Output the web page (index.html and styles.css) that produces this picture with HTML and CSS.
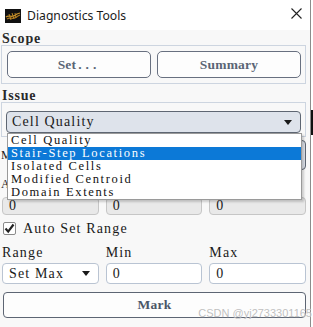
FILE: index.html
```html
<!DOCTYPE html>
<html>
<head>
<meta charset="utf-8">
<link rel="stylesheet" href="styles.css">
</head>
<body>
<div class="app">
  <div class="window">
    <div class="titlebar">
      <svg class="appicon" width="16" height="14" viewBox="0 0 16 14">
        <rect width="16" height="14" fill="#111"/>
        <path d="M1 8 C4 5 7 10 12 5 L15 4" stroke="#c8922a" stroke-width="1.2" fill="none"/>
        <path d="M2 10 C5 7 8 12 13 7 L15 6" stroke="#a8761e" stroke-width="1.2" fill="none"/>
        <path d="M4 5 L6 11 M7 4 L9 10 M10 4 L11 9" stroke="#b88424" stroke-width="1" fill="none"/>
      </svg>
      <span class="title">Diagnostics Tools</span>
      <svg class="close" width="11" height="11" viewBox="0 0 11 11">
        <path d="M0.5 0.5 L10.5 10.5 M10.5 0.5 L0.5 10.5" stroke="#222" stroke-width="1.1"/>
      </svg>
    </div>
    <div class="content">
      <div class="section-label">Scope</div>
      <div class="group scope">
        <button class="btn">Set<span class="dots">...</span></button>
        <button class="btn">Summary</button>
      </div>
      <div class="section-label issue-label">Issue</div>
      <div class="group issue">
        <div class="select dark">
          <span>Cell Quality</span><span class="arrow"></span>
          <ul class="dropdown">
            <li>Cell Quality</li>
            <li class="sel">Stair-Step Locations</li>
            <li>Isolated Cells</li>
            <li>Modified Centroid</li>
            <li>Domain Extents</li>
          </ul>
        </div>
      </div>
      <div class="measure-row">
        <span class="lbl">M</span>
        <div class="select dark measure"><span class="arrow"></span></div>
      </div>
      <div class="grid3 labels top-labels"><span>A</span><span></span><span></span></div>
      <div class="grid3 inputs-a">
        <div class="input disabled">0</div>
        <div class="input disabled">0</div>
        <div class="input disabled">0</div>
      </div>
      <div class="check">
        <span class="box"><svg width="11" height="11" viewBox="0 0 11 11"><path d="M1.5 5.5 L4.2 8.6 L9.5 1.5" stroke="#222" stroke-width="2.2" fill="none"/></svg></span>
        <span>Auto Set Range</span>
      </div>
      <div class="grid3 labels range-labels"><span>Range</span><span>Min</span><span>Max</span></div>
      <div class="grid3 inputs-b">
        <div class="select light"><span>Set Max</span><span class="arrow"></span></div>
        <div class="input">0</div>
        <div class="input">0</div>
      </div>
      <button class="btn mark">Mark</button>
    </div>
  </div>
  <div class="edge"></div>
  <div class="outside"><div class="blk"></div></div>
  <div class="watermark">CSDN @yj2733301165</div>
</div>
</body>
</html>
```
FILE: styles.css
```css
* { box-sizing: border-box; }
html, body { margin: 0; padding: 0; background: #fff; }
body { width: 313px; height: 327px; overflow: hidden; }
.app {
  position: relative;
  display: flex;
  width: 313px;
  height: 327px;
  font-family: "Liberation Serif", serif;
  font-size: 14px;
  letter-spacing: 1.15px;
  color: #1a1a1a;
}
.window {
  width: 310px;
  height: 327px;
  background: #f8f8f8;
  display: flex;
  flex-direction: column;
}
.edge { width: 1px; background: #8c8c8c; }
.outside { flex: 1; background: #fff; padding-top: 110px; }
.blk { width: 2px; height: 25px; background: #111; }

.titlebar {
  height: 30px;
  background: #fff;
  display: flex;
  align-items: center;
  padding: 0 0 0 5px;
}
.appicon { display: block; margin-top: 1px; }
.title {
  font-family: "Noto Sans", "Open Sans", sans-serif;
  font-size: 12.2px;
  letter-spacing: 0;
  color: #1b1b1b;
  margin-left: 6px;
  flex: 1;
}
.close { margin-right: 8px; margin-top: -3px; }

.content {
  padding: 0 4px 0 1px;
  display: flex;
  flex-direction: column;
}
.section-label {
  height: 15px;
  line-height: 13px;
  padding-left: 1px;
  font-weight: bold;
  font-size: 14px;
  letter-spacing: 0.8px;
  color: #2a2a2a;
  padding-top: 2px;
}
.issue-label { margin-top: 3px; height: 15px; }

.group {
  border: 1px solid #cdd5e0;
}
.scope {
  display: flex;
  gap: 6px;
  padding: 5px 4px 5px 5px;
  height: 39px;
}
.btn {
  font-family: "Liberation Serif", serif;
  font-size: 13.5px;
  font-weight: bold;
  letter-spacing: 0.2px;
  color: #5a6575;
  background: #fdfdfd;
  border: 1px solid #687080;
  border-radius: 5px;
  padding: 0;
  margin: 0;
}
.dots { letter-spacing: 4px; margin-left: 2px; }
.scope .btn { flex: 1; height: 27px; }

.issue {
  padding: 8px 4px 3px 4px;
  height: 35px;
}
.select {
  position: relative;
  display: flex;
  align-items: center;
  justify-content: space-between;
  border-radius: 4px;
}
.select.dark {
  height: 22px;
  background: #dee3eb;
  border: 1px solid #5e6672;
  padding: 0 8px 0 5px;
}
.arrow {
  width: 0; height: 0;
  border-left: 4px solid transparent;
  border-right: 4px solid transparent;
  border-top: 5px solid #1a1a1a;
}
.measure .arrow { margin-left: auto; }
.dropdown {
  position: absolute;
  left: 0;
  top: 21px;
  width: 295px;
  margin: 0;
  padding: 0;
  list-style: none;
  background: #fff;
  border: 1px solid #9a9a9a;
  box-shadow: 2px 2px 2px rgba(0,0,0,0.18);
  z-index: 5;
  color: #111;
  font-size: 12.5px;
  letter-spacing: 1.65px;
}
.dropdown li {
  height: 13px;
  line-height: 13px;
  padding-left: 3px;
  white-space: nowrap;
}
.dropdown li.sel { background: #0c79d7; color: #fff; }

.measure-row {
  display: flex;
  align-items: center;
  margin-top: 3px;
  height: 30px;
  padding-left: 0;
}
.measure-row .lbl { width: 59px; font-size: 12px; letter-spacing: 0; }
.select.measure { flex: 1; height: 30px; }

.grid3 {
  display: grid;
  grid-template-columns: 1fr 1fr 1fr;
  gap: 7px;
  margin-left: 1px;
}
.labels span { display: block; }
.top-labels { margin-top: 6px; height: 16px; line-height: 16px; }
.top-labels span { font-size: 12px; margin-left: -1px; }
.inputs-a { margin-top: 5px; }
.input {
  height: 18px;
  border-radius: 4px;
  border: 1px solid #b9c4d3;
  background: #fff;
  padding-left: 6px;
  display: flex;
  align-items: center;
  color: #1a1a1a;
}
.input.disabled { background: #e9e9e9; border-color: #c6c6c6; }
.inputs-a .input { height: 18px; }

.check {
  display: flex;
  align-items: center;
  margin-top: 7px;
  margin-left: 2px;
  height: 13px;
  gap: 7px;
}
.box {
  width: 13px; height: 13px;
  border: 1px solid #8a8a8a;
  border-radius: 2px;
  background: #fff;
  display: flex;
  align-items: center;
  justify-content: center;
}
.range-labels { margin-top: 11px; height: 14px; line-height: 14px; }
.inputs-b { margin-top: 3px; }
.inputs-b .input, .select.light { height: 21px; }
.select.light {
  background: #fff;
  border: 1px solid #bac4d2;
  padding: 0 8px 0 6px;
}
.mark {
  margin: 8px 0 0 2px;
  height: 26px;
  width: 303px;
  color: #4b5667;
  border-color: #5d6573;
  border-radius: 4px;
}
.watermark {
  position: absolute;
  right: 1px;
  top: 307px;
  font-family: "Liberation Sans", sans-serif;
  font-size: 11px;
  letter-spacing: 0;
  color: rgba(170,170,170,0.75);
  text-shadow: 0 0 1px #fff;
}
```
